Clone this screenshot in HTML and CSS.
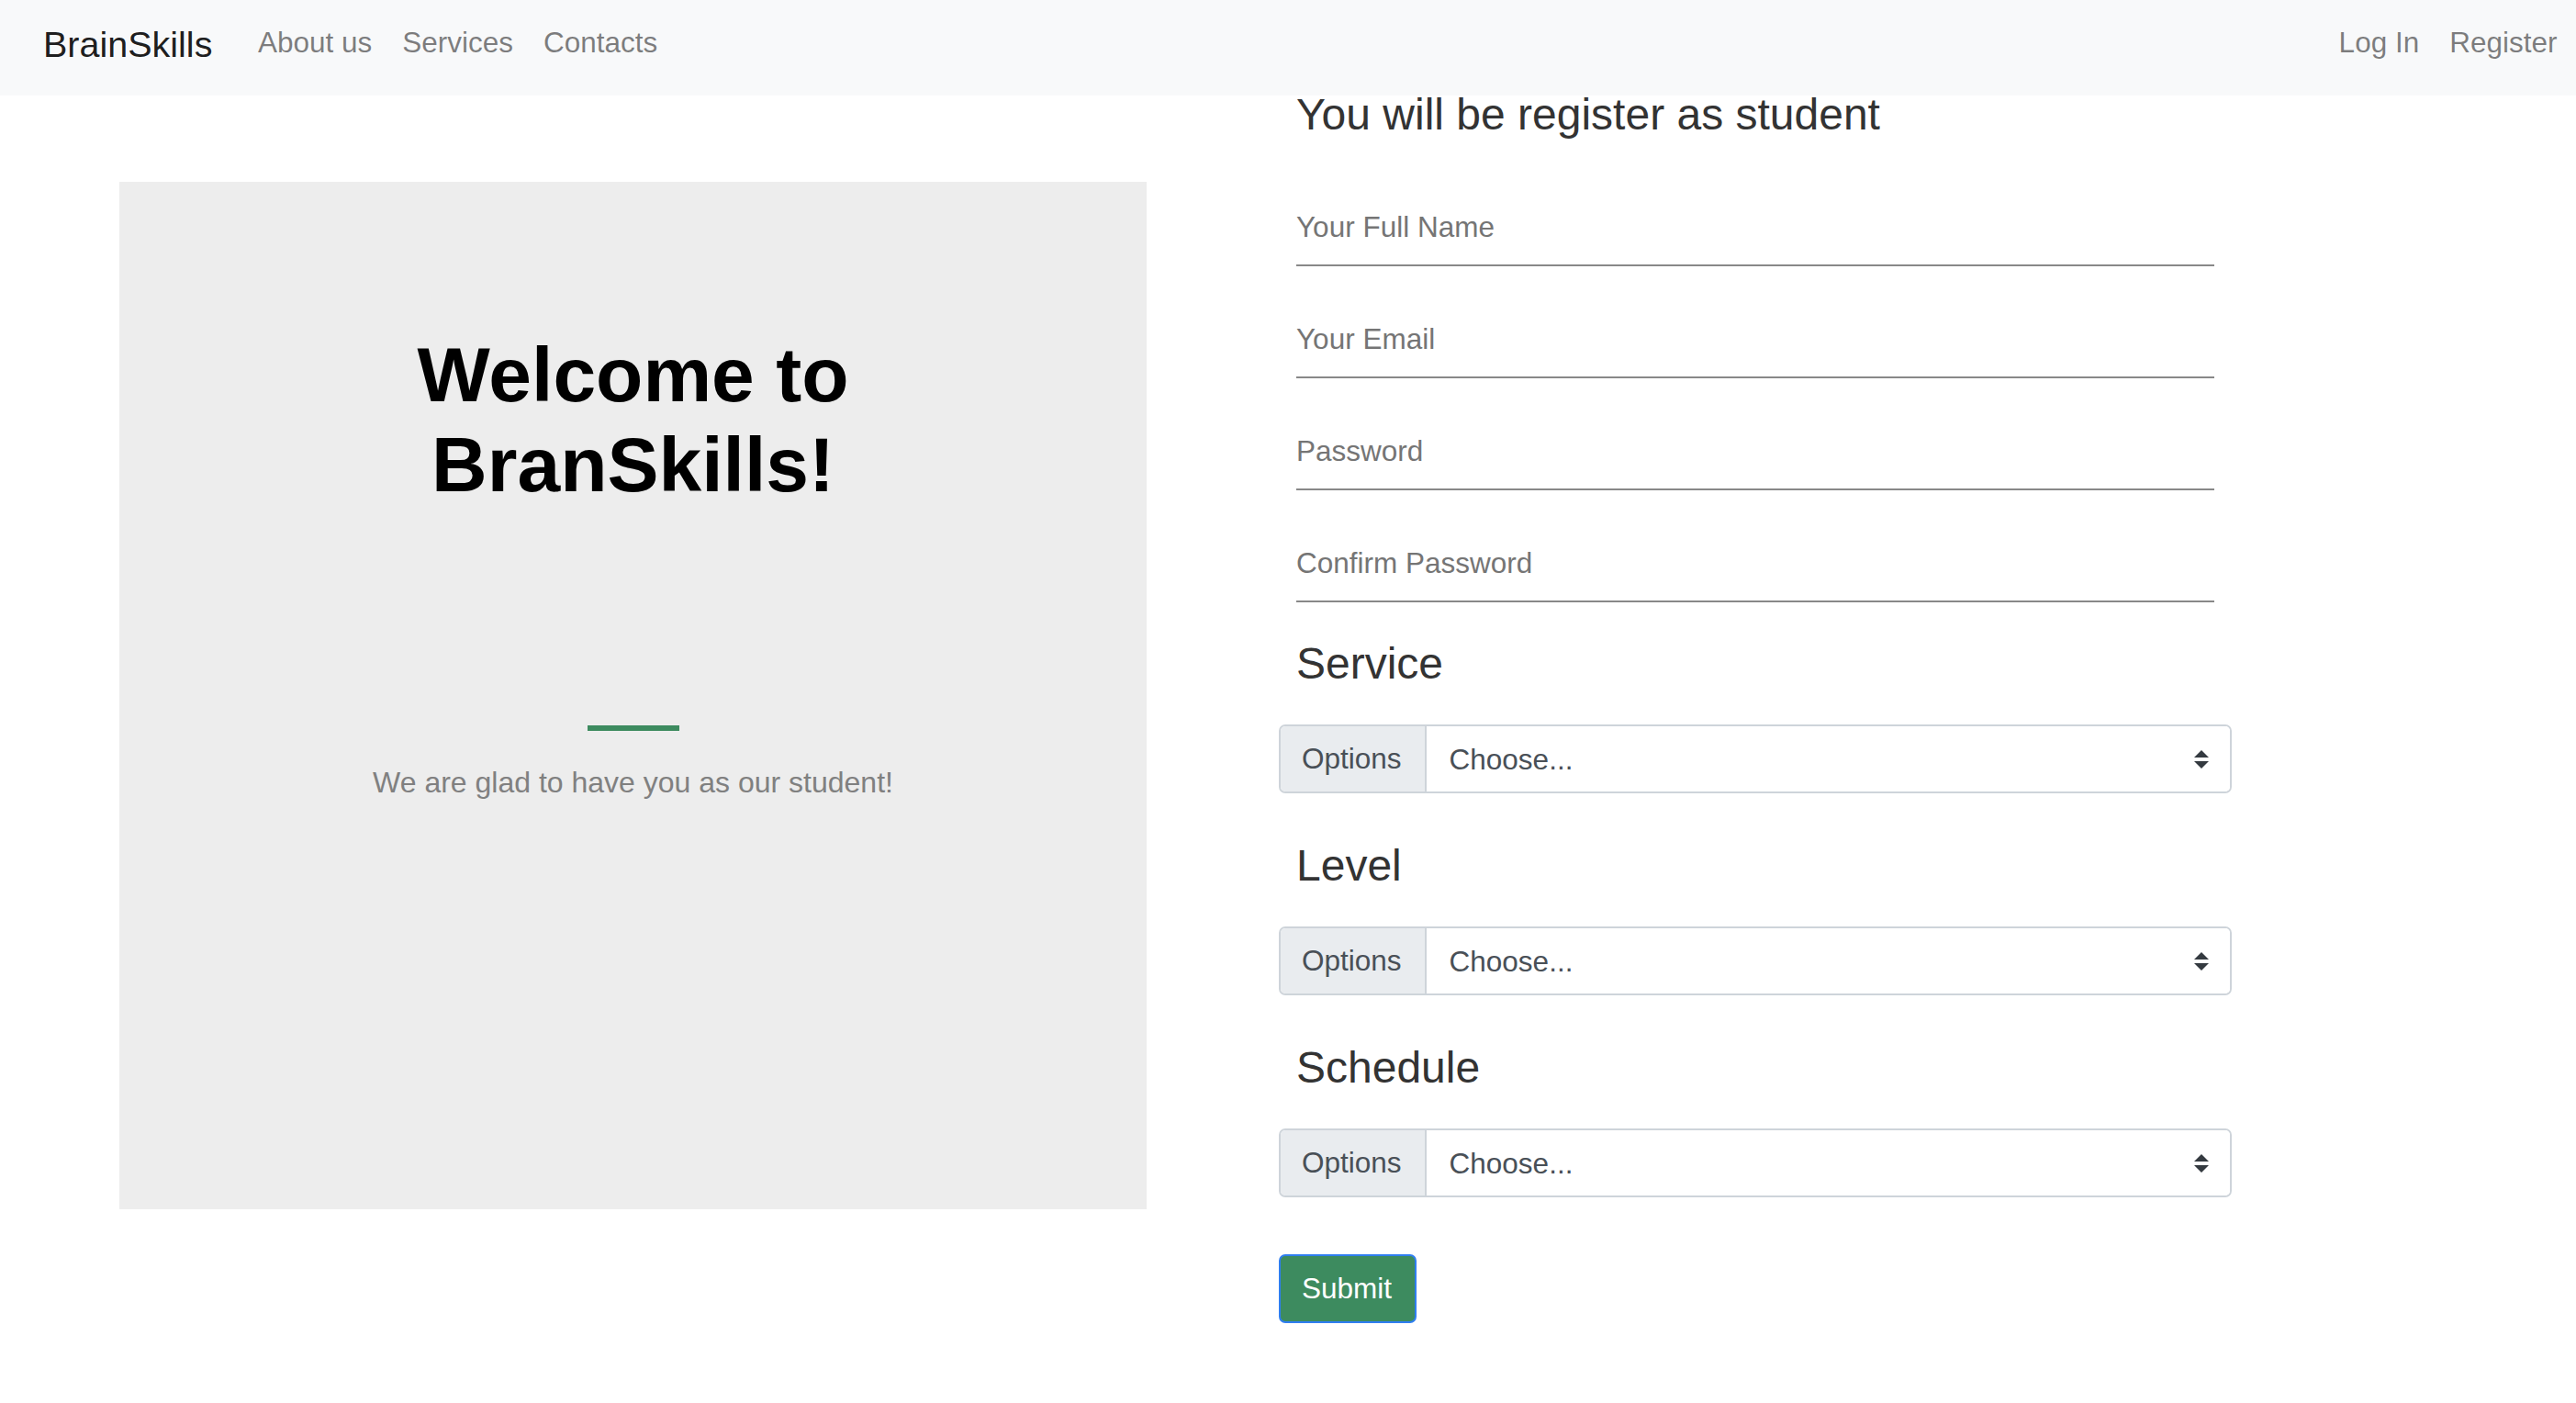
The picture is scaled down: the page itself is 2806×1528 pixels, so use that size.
FILE: index.html
```html
<!DOCTYPE html>
<html lang="en">
<head>
<meta charset="utf-8">
<title>BrainSkills - Register</title>
<link rel="stylesheet" href="styles.css">
</head>
<body>
<nav class="navbar">
  <a class="brand" href="#">BrainSkills</a>
  <ul class="nav-links">
    <li><a href="#">About us</a></li>
    <li><a href="#">Services</a></li>
    <li><a href="#">Contacts</a></li>
  </ul>
  <ul class="nav-links nav-right">
    <li><a href="#">Log In</a></li>
    <li><a href="#">Register</a></li>
  </ul>
</nav>
<main class="main">
  <section class="welcome">
    <h1 class="welcome-title">Welcome to<br>BranSkills!</h1>
    <div class="divider"></div>
    <p class="welcome-text">We are glad to have you as our student!</p>
  </section>
  <form class="register">
    <h2 class="form-title">You will be register as student</h2>
    <div class="fields">
      <input class="field" type="text" placeholder="Your Full Name">
      <input class="field" type="email" placeholder="Your Email">
      <input class="field" type="password" placeholder="Password">
      <input class="field" type="password" placeholder="Confirm Password">
    </div>
    <div class="select-section">
      <h3 class="section-title">Service</h3>
      <div class="input-group">
        <label class="addon">Options</label>
        <div class="select-wrap">
          <select class="select"><option>Choose...</option></select>
          <svg class="caret" viewBox="0 0 16 20"><path d="M8 0L0 8h16zM8 20L0 12h16z" fill="#343a40"/></svg>
        </div>
      </div>
    </div>
    <div class="select-section">
      <h3 class="section-title">Level</h3>
      <div class="input-group">
        <label class="addon">Options</label>
        <div class="select-wrap">
          <select class="select"><option>Choose...</option></select>
          <svg class="caret" viewBox="0 0 16 20"><path d="M8 0L0 8h16zM8 20L0 12h16z" fill="#343a40"/></svg>
        </div>
      </div>
    </div>
    <div class="select-section">
      <h3 class="section-title">Schedule</h3>
      <div class="input-group">
        <label class="addon">Options</label>
        <div class="select-wrap">
          <select class="select"><option>Choose...</option></select>
          <svg class="caret" viewBox="0 0 16 20"><path d="M8 0L0 8h16zM8 20L0 12h16z" fill="#343a40"/></svg>
        </div>
      </div>
    </div>
    <button class="submit" type="button">Submit</button>
  </form>
</main>
</body>
</html>
```
FILE: styles.css
```css
html, body {
  margin: 0;
  padding: 0;
  background: #fff;
  font-family: "Liberation Sans", Arial, Helvetica, sans-serif;
}

.navbar {
  display: flex;
  align-items: center;
  height: 104px;
  box-sizing: border-box;
  padding: 0 4px 7px 47px;
  background: #f8f9fa;
}

.brand {
  font-size: 39.5px;
  line-height: 1.5;
  color: rgba(0, 0, 0, 0.9);
  text-decoration: none;
  margin-right: 33px;
}

.nav-links {
  display: flex;
  list-style: none;
  margin: 0;
  padding: 0 0 4px;
}

.nav-links a {
  display: block;
  padding: 0 16.5px;
  font-size: 31.5px;
  line-height: 1.5;
  color: rgba(0, 0, 0, 0.5);
  text-decoration: none;
}

.nav-right {
  margin-left: auto;
}

.main {
  display: flex;
  align-items: flex-start;
  padding-left: 130px;
  gap: 144px;
}

.welcome {
  width: 1119px;
  height: 1119px;
  margin-top: 94px;
  box-sizing: border-box;
  padding-top: 161px;
  background: #ededed;
  display: flex;
  flex-direction: column;
  align-items: center;
}

.welcome-title {
  margin: 0;
  font-size: 84px;
  line-height: 98px;
  font-weight: 700;
  color: #000;
  text-align: center;
}

.divider {
  width: 100px;
  height: 6px;
  margin-top: 235px;
  background: #3d8b5f;
}

.welcome-text {
  margin: 32px 0 0;
  font-size: 32px;
  line-height: 48px;
  color: #808080;
}

.register {
  width: 1038px;
}

.form-title {
  margin: 3px 19px 0;
  font-size: 48px;
  line-height: 36px;
  font-weight: 400;
  color: #333;
}

.fields {
  margin: 66px 0 38px;
  padding: 0 19px;
}

.field {
  display: block;
  width: 1000px;
  height: 81px;
  box-sizing: border-box;
  padding: 20px 0 23px;
  margin: 0 0 41px;
  border: 0;
  border-bottom: 2px solid #888;
  border-radius: 0;
  background: transparent;
  font-family: "Liberation Sans", Arial, sans-serif;
  font-size: 31.5px;
  line-height: 36px;
  color: #333;
  outline: none;
}

.field:last-child {
  margin-bottom: 0;
}

.field::placeholder {
  color: #757575;
  opacity: 1;
}

.select-section {
  margin-bottom: 50px;
}

.section-title {
  margin: 0 19px 37px;
  font-size: 48px;
  line-height: 58px;
  font-weight: 400;
  color: #333;
}

.input-group {
  display: flex;
  height: 75px;
  box-sizing: border-box;
  border: 2px solid #ced4da;
  border-radius: 7px;
  overflow: hidden;
}

.addon {
  display: flex;
  align-items: center;
  padding: 0 25px 0 23px;
  background: #e9ecef;
  border-right: 2px solid #ced4da;
  font-size: 31.5px;
  color: #495057;
}

.select-wrap {
  position: relative;
  flex: 1;
}

.select {
  -webkit-appearance: none;
  appearance: none;
  display: block;
  width: 100%;
  height: 100%;
  box-sizing: border-box;
  border: 0;
  border-radius: 0;
  background: #fff;
  padding: 0 60px 0 25px;
  font-family: "Liberation Sans", Arial, sans-serif;
  font-size: 31.5px;
  color: #495057;
  outline: none;
}

.caret {
  position: absolute;
  right: 23px;
  top: 50%;
  width: 16px;
  height: 20px;
  transform: translateY(-50%);
  pointer-events: none;
}

.submit {
  display: block;
  margin-top: 62px;
  height: 75px;
  box-sizing: border-box;
  padding: 0 25px 0 23px;
  background: #3d8b5f;
  border: 2px solid #2f7ef0;
  border-radius: 7px;
  color: #fff;
  font-family: "Liberation Sans", Arial, sans-serif;
  font-size: 31.5px;
  cursor: pointer;
}
```
